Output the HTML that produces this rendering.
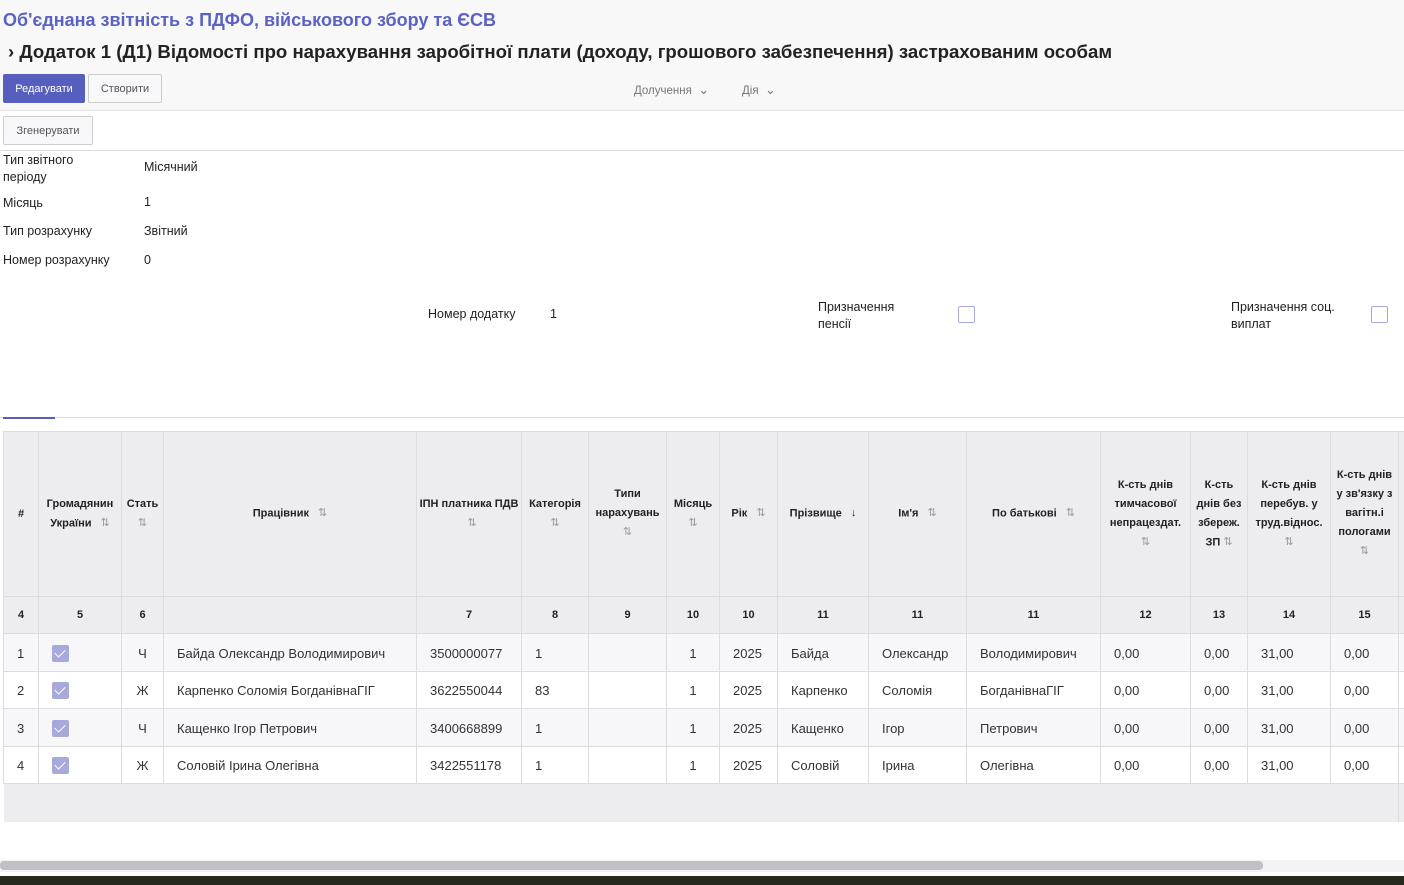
<!DOCTYPE html>
<html><head><meta charset="utf-8"><style>
*{box-sizing:border-box;margin:0;padding:0}
body{width:1404px;height:885px;overflow:hidden;background:#fff;font-family:"Liberation Sans",sans-serif;color:#222;position:relative}
.top{position:absolute;left:0;top:0;width:1404px;height:111px;background:#f8f8f9;border-bottom:1px solid #e4e4e6}
.a{position:absolute;white-space:nowrap}
.btn{position:absolute;height:29px;font-size:11px;display:flex;align-items:center;justify-content:center;border-radius:2px}
.lbl{font-size:12.5px;color:#222}
table{position:absolute;left:3px;top:431px;border-collapse:collapse;table-layout:fixed;width:1401px}
td,th{border:1px solid #dcdcdf;font-size:13px;color:#333;white-space:nowrap;overflow:hidden}
th{background:#ededef;font-size:11px;font-weight:bold;color:#222;line-height:19px;white-space:normal;text-align:center;padding:0 2px}
tr.h th{height:165px}
tr.n th{height:37px}
tr.d td{height:37.5px;padding-left:13px;padding-top:2px;background:#fff}
tr.d:nth-child(odd) td{background:#f7f7f9}
tr.f td{height:38px;background:#ededef;border:none}
.s{display:inline-block;vertical-align:middle;margin-left:6px;color:#999;font-weight:normal}
.cb{display:inline-block;width:17px;height:17px;background:#a7a9da;border-radius:2px;position:relative;vertical-align:middle}
.cb:after{content:"";position:absolute;left:5px;top:2px;width:5px;height:9px;border:solid #fff;border-width:0 1.5px 1.5px 0;transform:rotate(45deg)}
.c{text-align:center;padding-left:0!important}
</style></head><body>
<div class="top"></div>
<div class="a" style="left:3px;top:10px;font-size:18px;font-weight:bold;color:#5a62c4">Об'єднана звітність з ПДФО, військового збору та ЄСВ</div>
<div class="a" style="left:8px;top:41px;font-size:18.6px;font-weight:bold;color:#222">› Додаток 1 (Д1) Відомості про нарахування заробітної плати (доходу, грошового забезпечення) застрахованим особам</div>
<div class="btn" style="left:3px;top:74px;width:82px;background:#575fbe;color:#fff">Редагувати</div>
<div class="btn" style="left:88px;top:74px;width:74px;border:1px solid #ccc;background:#f8f8fa;color:#555">Створити</div>
<div class="a" style="left:634px;top:82px;font-size:11.5px;color:#777">Долучення &nbsp;<span style="font-size:13px">⌄</span></div>
<div class="a" style="left:742px;top:82px;font-size:11.5px;color:#777">Дія &nbsp;<span style="font-size:13px">⌄</span></div>
<div class="btn" style="left:3px;top:116px;width:90px;border:1px solid #ccc;background:#f8f8fa;color:#555">Згенерувати</div>
<div class="a" style="left:0;top:150px;width:1404px;border-top:1px solid #ddd"></div>
<div class="a lbl" style="left:3px;top:152px;line-height:17px">Тип звітного<br>періоду</div>
<div class="a lbl" style="left:144px;top:160px">Місячний</div>
<div class="a lbl" style="left:3px;top:196px">Місяць</div><div class="a lbl" style="left:144px;top:195px">1</div>
<div class="a lbl" style="left:3px;top:224px">Тип розрахунку</div><div class="a lbl" style="left:144px;top:224px">Звітний</div>
<div class="a lbl" style="left:3px;top:253px">Номер розрахунку</div><div class="a lbl" style="left:144px;top:253px">0</div>
<div class="a lbl" style="left:428px;top:307px">Номер додатку</div><div class="a lbl" style="left:550px;top:307px">1</div>
<div class="a lbl" style="left:818px;top:299px;line-height:17px">Призначення<br>пенсії</div>
<div class="a" style="left:958px;top:306px;width:17px;height:17px;border:1px solid #a7a9da;border-radius:2px"></div>
<div class="a lbl" style="left:1231px;top:299px;line-height:17px">Призначення соц.<br>виплат</div>
<div class="a" style="left:1371px;top:306px;width:17px;height:17px;border:1px solid #a7a9da;border-radius:2px"></div>
<div class="a" style="left:0;top:417px;width:1404px;border-top:1px solid #ddd"></div>
<div class="a" style="left:3px;top:417px;width:52px;border-top:2px solid #575fbe"></div>
<table>
<colgroup><col style="width:35px"><col style="width:83px"><col style="width:42px"><col style="width:253px"><col style="width:105px"><col style="width:67px"><col style="width:78px"><col style="width:53px"><col style="width:58px"><col style="width:91px"><col style="width:98px"><col style="width:134px"><col style="width:90px"><col style="width:57px"><col style="width:83px"><col style="width:68px"><col style="width:6px"></colgroup>
<tr class="h"><th>#</th><th>Громадянин України <span class="s">⇅</span></th><th>Стать<br><span class="s" style="margin:0">⇅</span></th><th>Працівник <span class="s">⇅</span></th><th>ІПН платника ПДВ <span class="s">⇅</span></th><th>Категорія<br><span class="s" style="margin:0">⇅</span></th><th>Типи нарахувань<br><span class="s" style="margin:0">⇅</span></th><th>Місяць<br><span class="s" style="margin:0">⇅</span></th><th>Рік <span class="s">⇅</span></th><th>Прізвище <span class="s" style="color:#222">↓</span></th><th>Ім'я <span class="s">⇅</span></th><th>По батькові <span class="s">⇅</span></th><th>К-сть днів тимчасової непрацездат.<br><span class="s" style="margin:0">⇅</span></th><th>К-сть днів без збереж. ЗП <span class="s" style="margin:0">⇅</span></th><th>К-сть днів перебув. у труд.віднос.<br><span class="s" style="margin:0">⇅</span></th><th>К-сть днів у зв'язку з вагітн.і пологами<br><span class="s" style="margin:0">⇅</span></th><th></th></tr>
<tr class="n"><th>4</th><th>5</th><th>6</th><th></th><th>7</th><th>8</th><th>9</th><th>10</th><th>10</th><th>11</th><th>11</th><th>11</th><th>12</th><th>13</th><th>14</th><th>15</th><th></th></tr>
<tr class="d"><td>1</td><td><span class="cb"></span></td><td class="c">Ч</td><td>Байда Олександр Володимирович</td><td>3500000077</td><td>1</td><td></td><td class="c">1</td><td>2025</td><td>Байда</td><td>Олександр</td><td>Володимирович</td><td>0,00</td><td>0,00</td><td>31,00</td><td>0,00</td><td></td></tr>
<tr class="d"><td>2</td><td><span class="cb"></span></td><td class="c">Ж</td><td>Карпенко Соломія БогданівнаГІГ</td><td>3622550044</td><td>83</td><td></td><td class="c">1</td><td>2025</td><td>Карпенко</td><td>Соломія</td><td>БогданівнаГІГ</td><td>0,00</td><td>0,00</td><td>31,00</td><td>0,00</td><td></td></tr>
<tr class="d"><td>3</td><td><span class="cb"></span></td><td class="c">Ч</td><td>Кащенко Ігор Петрович</td><td>3400668899</td><td>1</td><td></td><td class="c">1</td><td>2025</td><td>Кащенко</td><td>Ігор</td><td>Петрович</td><td>0,00</td><td>0,00</td><td>31,00</td><td>0,00</td><td></td></tr>
<tr class="d"><td>4</td><td><span class="cb"></span></td><td class="c">Ж</td><td>Соловій Ірина Олегівна</td><td>3422551178</td><td>1</td><td></td><td class="c">1</td><td>2025</td><td>Соловій</td><td>Ірина</td><td>Олегівна</td><td>0,00</td><td>0,00</td><td>31,00</td><td>0,00</td><td></td></tr>
<tr class="f"><td colspan="16"></td><td style="border-left:1px solid #dcdcdf"></td></tr>
</table>
<div class="a" style="left:0;top:860px;width:1404px;height:12px;background:#f3f3f4"></div>
<div class="a" style="left:0;top:861px;width:1263px;height:9px;background:#c0c0c6;border-radius:4px"></div>
<div class="a" style="left:0;top:876px;width:1404px;height:9px;background:#252a1c"></div>
</body></html>
